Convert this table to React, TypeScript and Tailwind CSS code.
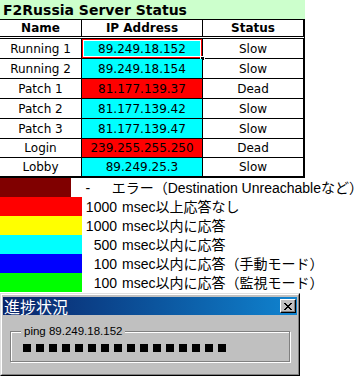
import React from "react";

type Row = {
  name: string;
  ip: string;
  bg: string;
  status: string;
  h: string;
  sel?: boolean;
  last?: boolean;
};

const rows: Row[] = [
  { name: "Running 1", ip: "89.249.18.152", bg: "bg-[#00ffff]", status: "Slow", h: "h-[20px]", sel: true },
  { name: "Running 2", ip: "89.249.18.154", bg: "bg-[#00ffff]", status: "Slow", h: "h-[20px]" },
  { name: "Patch 1", ip: "81.177.139.37", bg: "bg-[#ff0000]", status: "Dead", h: "h-[20px]" },
  { name: "Patch 2", ip: "81.177.139.42", bg: "bg-[#00ffff]", status: "Slow", h: "h-[20px]" },
  { name: "Patch 3", ip: "81.177.139.47", bg: "bg-[#00ffff]", status: "Slow", h: "h-[20px]" },
  { name: "Login", ip: "239.255.255.250", bg: "bg-[#ff0000]", status: "Dead", h: "h-[19px]" },
  { name: "Lobby", ip: "89.249.25.3", bg: "bg-[#00ffff]", status: "Slow", h: "h-[20px]", last: true },
];

type Legend = { color: string; num: string; text: string; dash?: boolean };

const legend: Legend[] = [
  { color: "bg-[#800000]", num: "-", text: "エラー（Destination Unreachableなど）", dash: true },
  { color: "bg-[#ff0000]", num: "1000", text: "msec以上応答なし" },
  { color: "bg-[#ffff00]", num: "1000", text: "msec以内に応答" },
  { color: "bg-[#00ffff]", num: "500", text: "msec以内に応答" },
  { color: "bg-[#0000ff]", num: "100", text: "msec以内に応答（手動モード）" },
  { color: "bg-[#00ff00]", num: "100", text: "msec以内に応答（監視モード）" },
];

export default function App() {
  return (
    <div className="w-[363px] h-[376px] bg-white overflow-hidden text-black">
      {/* Table */}
      <div className="w-[305px] font-['DejaVu_Sans',sans-serif] text-[12px]">
        <div className="h-[20px] bg-[#ccffcc] border-b border-black flex items-center pl-[3px] font-bold text-[14px] leading-none">
          F2Russia Server Status
        </div>
        <div className="flex h-[19px] border-b-[3px] border-double border-black border-r-2 border-r-black font-bold leading-none">
          <div className="w-[82px] border-r border-black flex items-center justify-center">Name</div>
          <div className="w-[121px] border-r border-black flex items-center justify-center">IP Address</div>
          <div className="flex-1 flex items-center justify-center">Status</div>
        </div>
        {rows.map((r) => (
          <div
            key={r.name}
            className={`flex ${r.h} border-r-2 border-r-black ${r.last ? "border-b-2" : "border-b"} border-b-black leading-none`}
          >
            <div className="w-[82px] border-r border-black flex items-center justify-center">{r.name}</div>
            <div className={`relative w-[121px] border-r border-black flex items-center justify-center ${r.bg}`}>
              {r.ip}
              {r.sel && (
                <>
                  <div className="absolute inset-0 border border-[#ff0000] shadow-[inset_1px_1px_0_#ffffff,inset_-1px_-1px_0_#ffffff]" />
                  <div className="absolute -right-[3px] -bottom-[3px] w-[5px] h-[5px] bg-black border border-white" />
                </>
              )}
            </div>
            <div className="flex-1 flex items-center justify-center">{r.status}</div>
          </div>
        ))}
      </div>

      {/* Legend */}
      <div className="font-['Liberation_Sans','Noto_Sans_CJK_JP',sans-serif] text-[14px] leading-none">
        {legend.map((l, i) => (
          <div key={i} className="flex h-[19px] items-center">
            <div className={`w-[82px] h-full ${l.color}`} />
            {l.dash ? (
              <>
                <span className="w-[35px] text-center pl-[3px]">-</span>
                <span className="ml-[10px] whitespace-nowrap">{l.text}</span>
              </>
            ) : (
              <>
                <span className="w-[35px] text-right">{l.num}</span>
                <span className="ml-[5px] whitespace-nowrap">{l.text}</span>
              </>
            )}
          </div>
        ))}
      </div>

      {/* Dialog */}
      <div className="mt-[1px] w-[300px] h-[83px] border border-t-[#dfdfdf] border-l-[#dfdfdf] border-r-black border-b-black bg-[#c0c0c0]">
        <div className="h-full border border-t-white border-l-white border-r-[#808080] border-b-[#808080] pt-[2px] px-[1px] flex flex-col">
          <div className="h-[18px] flex items-center justify-between pr-[1px] bg-linear-to-r from-[#0a246a] to-[#1084d0]">
            <span className="text-white text-[16px] leading-none font-['Noto_Sans_CJK_JP',sans-serif] pl-[1px]">
              進捗状況
            </span>
            <div className="w-[16px] h-[14px] bg-[#c0c0c0] border border-t-white border-l-white border-r-black border-b-black flex items-center justify-center shadow-[inset_-1px_-1px_0_#808080]">
              <svg width="8" height="7" viewBox="0 0 8 7" shapeRendering="crispEdges">
                <path
                  fill="#000"
                  d="M0 0h2v1h1v1h2V1h1V0h2v1H7v1H6v1H5v1h1v1h1v1h1v1H6V6H5V5H3v1H2v1H0V6h1V5h1V4h1V3H2V2H1V1H0z"
                />
              </svg>
            </div>
          </div>
          <div className="relative mt-[16px] ml-[7px] w-[280px] h-[31px] border border-[#808080] shadow-[inset_1px_1px_0_#ffffff,1px_1px_0_#ffffff] pl-[12px] pt-[12px]">
            <span className="absolute left-[10px] -top-[8px] px-[3px] bg-[#c0c0c0] text-[11.5px] leading-[14px] font-['Liberation_Sans',sans-serif] whitespace-nowrap">
              ping 89.249.18.152
            </span>
            <div className="flex gap-[5px]">
              {Array.from({ length: 16 }).map((_, i) => (
                <div key={i} className="w-[8px] h-[8px] bg-black" />
              ))}
            </div>
          </div>
        </div>
      </div>
    </div>
  );
}
